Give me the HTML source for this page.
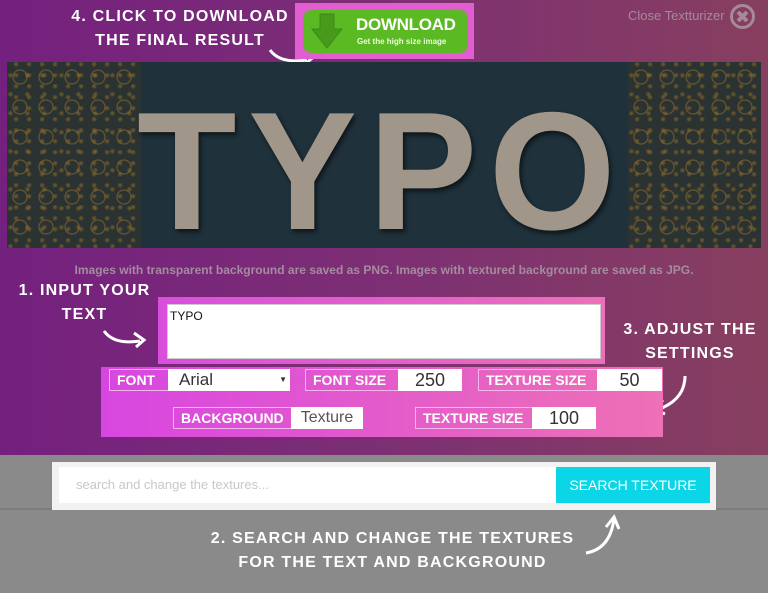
<!DOCTYPE html>
<html><head><meta charset="utf-8"><style>
*{margin:0;padding:0;box-sizing:border-box}
body{width:768px;height:593px;overflow:hidden;position:relative;background:#8a8a8a;font-family:"Liberation Sans",sans-serif}
.top{position:absolute;left:0;top:0;width:768px;height:455px;background:linear-gradient(90deg,#74207f 0%,#7d2f74 50%,#873f5f 100%)}
.hand{position:absolute;color:#fff;font-weight:bold;font-size:16px;letter-spacing:1.2px;text-align:center;line-height:24px;font-family:"Liberation Sans",sans-serif}
.abs{position:absolute}
.lbl{position:absolute;border:1px solid #f6b5ec;color:#fff;font-weight:bold;font-size:14px;line-height:20px;padding-left:7px;height:22px}
.val{position:absolute;background:#fff;color:#333;font-size:18px;line-height:22px;height:22px;text-align:center}
.gold{position:absolute;top:0;height:186px;background:#2a3232;background-image:radial-gradient(circle at 50% 50%,transparent 6px,rgba(150,115,45,.7) 7px,transparent 8px),radial-gradient(circle at 20% 70%,rgba(140,105,40,.6) 1px,transparent 3px),radial-gradient(circle at 70% 20%,rgba(140,105,40,.6) 1px,transparent 3px);background-size:26px 30px,17px 19px,13px 11px}
</style></head><body>
<div class="top"></div>
<div class="hand" style="left:60px;top:5px;width:240px">4. CLICK TO DOWNLOAD<br>THE FINAL RESULT</div>
<svg class="abs" style="left:265px;top:44px" width="60" height="26"><path d="M5 6 Q15 20 42 16" stroke="#fff" stroke-width="3" fill="none"/><path d="M36 8 L46 15 L38 22" stroke="#fff" stroke-width="3" fill="none"/></svg>
<div class="abs" style="left:295px;top:3px;width:179px;height:56px;background:#e05ed0"></div>
<div class="abs" style="left:303px;top:10px;width:165px;height:43px;background:#5bb924;border-radius:9px"></div>
<svg class="abs" style="left:308px;top:12px" width="40" height="40"><path d="M12 2 H26 V17 H34 L19 36 L4 17 H12 Z" fill="#479a1a" stroke="#3d8a14" stroke-width="1"/></svg>
<div class="abs" style="left:356px;top:15px;color:#fff;font-weight:bold;font-size:17px;letter-spacing:-0.3px">DOWNLOAD</div>
<div class="abs" style="left:357px;top:37px;color:#e8ffd8;font-weight:bold;font-size:8px">Get the high size image</div>
<div class="abs" style="left:628px;top:8px;color:#a58a9a;font-size:13px">Close Textturizer</div>
<svg class="abs" style="left:729px;top:3px" width="27" height="27"><circle cx="13.5" cy="13.5" r="11" fill="none" stroke="#a58a9a" stroke-width="3"/><path d="M9 9 L18 18 M18 9 L9 18" stroke="#a58a9a" stroke-width="4"/></svg>
<div class="abs" style="left:7px;top:62px;width:754px;height:186px;background:#1f313b;overflow:hidden">
 <div class="gold" style="left:0;width:134px"></div>
 <div class="gold" style="left:621px;width:133px"></div>
 <div class="abs" style="left:130px;top:9px;width:520px;font-weight:bold;font-size:168px;line-height:200px;color:#a1968a;letter-spacing:12px;transform:scaleX(0.97);transform-origin:0 0;text-shadow:2px 3px 5px rgba(0,0,0,.6)">TYPO</div>
</div>
<div class="abs" style="left:0;top:263px;width:768px;text-align:center;color:#a48c9e;font-weight:bold;font-size:12px">Images with transparent background are saved as PNG. Images with textured background are saved as JPG.</div>
<div class="hand" style="left:12px;top:279px;width:145px">1. INPUT YOUR<br>TEXT</div>
<svg class="abs" style="left:100px;top:325px" width="55" height="26"><path d="M4 6 Q14 20 40 16" stroke="#fff" stroke-width="3" fill="none"/><path d="M34 8 L44 15 L36 22" stroke="#fff" stroke-width="3" fill="none"/></svg>
<div class="abs" style="left:158px;top:297px;width:447px;height:67px;background:linear-gradient(90deg,#d94fdd,#ee6fb9)"></div>
<div class="abs" style="left:167px;top:304px;width:434px;height:55px;background:#fff;border:1px solid #ccc;font-size:12px;padding:4px 2px;color:#111">TYPO</div>
<div class="hand" style="left:610px;top:318px;width:160px">3. ADJUST THE<br>SETTINGS</div>
<svg class="abs" style="left:645px;top:372px" width="45" height="45"><path d="M40 4 Q40 28 12 38" stroke="#fff" stroke-width="3" fill="none"/><path d="M18 28 L8 37 L20 42" stroke="#fff" stroke-width="3" fill="none"/></svg>
<div class="abs" style="left:101px;top:367px;width:562px;height:70px;background:linear-gradient(90deg,#d846e1,#ee70b5)"></div>
<div class="lbl" style="left:109px;top:369px;width:60px">FONT</div>
<div class="val" style="left:168px;top:369px;width:122px;text-align:left;padding-left:11px;font-size:17px">Arial<span style="position:absolute;right:3px;font-size:8px">▼</span></div>
<div class="lbl" style="left:305px;top:369px;width:94px">FONT SIZE</div>
<div class="val" style="left:398px;top:369px;width:64px">250</div>
<div class="lbl" style="left:478px;top:369px;width:120px">TEXTURE SIZE</div>
<div class="val" style="left:597px;top:369px;width:65px">50</div>
<div class="lbl" style="left:173px;top:407px;width:119px">BACKGROUND</div>
<div class="val" style="left:291px;top:407px;width:72px;color:#555;font-size:16px">Texture</div>
<div class="lbl" style="left:415px;top:407px;width:118px">TEXTURE SIZE</div>
<div class="val" style="left:532px;top:407px;width:64px">100</div>
<div class="abs" style="left:0;top:508px;width:768px;height:2px;background:#7c7c7c"></div>
<div class="abs" style="left:52px;top:462px;width:664px;height:48px;background:#f2f2f2"></div>
<div class="abs" style="left:59px;top:467px;width:497px;height:36px;background:#fff;color:#c8c8c8;font-size:13px;line-height:36px;padding-left:17px">search and change the textures...</div>
<div class="abs" style="left:556px;top:467px;width:154px;height:36px;background:#0bd6e7;color:#fff;font-size:14px;line-height:36px;text-align:center">SEARCH TEXTURE</div>
<div class="hand" style="left:195px;top:527px;width:395px">2. SEARCH AND CHANGE THE TEXTURES<br>FOR THE TEXT AND BACKGROUND</div>
<svg class="abs" style="left:582px;top:513px" width="45" height="45"><path d="M4 40 Q28 36 32 6" stroke="#fff" stroke-width="3" fill="none"/><path d="M24 14 L32 4 L37 16" stroke="#fff" stroke-width="3" fill="none"/></svg>
</body></html>
